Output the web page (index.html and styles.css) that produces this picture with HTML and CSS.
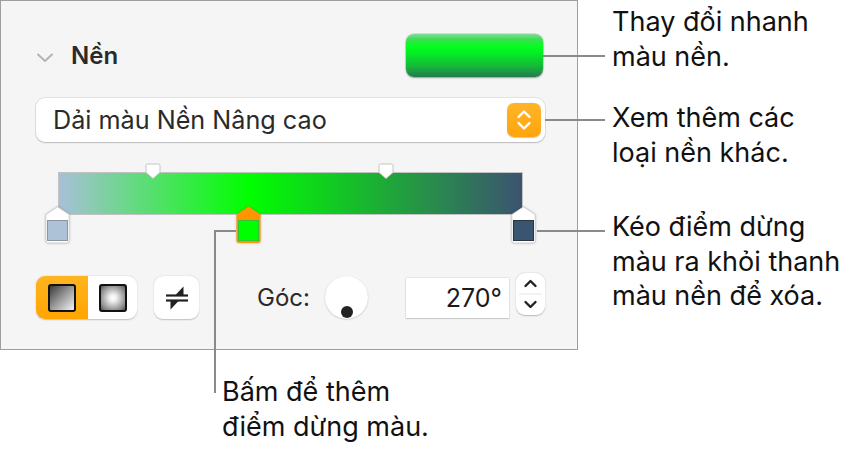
FILE: index.html
```html
<!DOCTYPE html>
<html lang="vi">
<head>
<meta charset="utf-8">
<title>Nền</title>
<link rel="stylesheet" href="styles.css">
</head>
<body>
<div class="stage">
  <div class="top">
    <section class="panel">
      <div class="head">
        <svg class="chev" width="18" height="11" viewBox="0 0 18 11"><path d="M2 2.5 L9 9 L16 2.5" fill="none" stroke="#b4b4b4" stroke-width="2" stroke-linecap="round" stroke-linejoin="round"/></svg>
        <span class="title">Nền</span>
        <div class="well"></div>
      </div>
      <div class="select">
        <span class="sel-text">Dải màu Nền Nâng cao</span>
        <span class="pop">
          <svg width="34" height="34" viewBox="0 0 34 34"><path d="M11.5 14 L17 8.5 L22.5 14 M11.5 20 L17 25.5 L22.5 20" fill="none" stroke="#fff" stroke-width="2.4" stroke-linecap="round" stroke-linejoin="round"/></svg>
        </span>
      </div>
      <div class="grad">
        <div class="bar"></div>
        <svg class="mid" style="left:109px" width="16" height="17" viewBox="0 0 16 17"><path d="M2.5 1 H13.5 Q15 1 15 2.5 V9.5 L8 15.5 L1 9.5 V2.5 Q1 1 2.5 1 Z" fill="#fff" stroke="#c4c4c4" stroke-width="1"/></svg>
        <svg class="mid" style="left:342px" width="16" height="17" viewBox="0 0 16 17"><path d="M2.5 1 H13.5 Q15 1 15 2.5 V9.5 L8 15.5 L1 9.5 V2.5 Q1 1 2.5 1 Z" fill="#fff" stroke="#c4c4c4" stroke-width="1"/></svg>
        <svg class="stop" style="left:9px" width="25" height="38" viewBox="0 0 25 38"><path d="M12.5 0.8 L24.2 8.6 V34.5 Q24.2 37 21.7 37 H3.3 Q0.8 37 0.8 34.5 V8.6 Z" fill="#fff" stroke="#cfcfcf" stroke-width="1"/><rect x="2.5" y="14.5" width="20" height="20" fill="#adc1d7" stroke="#8d95a0" stroke-width="1"/></svg>
        <svg class="stop" style="left:200px" width="25" height="38" viewBox="0 0 25 38"><path d="M12.5 0.3 L24.6 8.6 V34.5 Q24.6 37 22.1 37 H2.9 Q0.4 37 0.4 34.5 V8.6 Z" fill="#ff9500"/><rect x="2.5" y="14.5" width="20" height="20" fill="#00ff00" stroke="#33c433" stroke-width="1"/></svg>
        <svg class="stop" style="left:475px" width="25" height="38" viewBox="0 0 25 38"><path d="M12.5 0.8 L24.2 8.6 V34.5 Q24.2 37 21.7 37 H3.3 Q0.8 37 0.8 34.5 V8.6 Z" fill="#fff" stroke="#cfcfcf" stroke-width="1"/><rect x="2.5" y="14.5" width="20" height="20" fill="#3a5570" stroke="#2a3644" stroke-width="1"/></svg>
      </div>
      <div class="controls">
        <div class="seg">
          <span class="seg-btn on"><i class="sq lin"></i></span>
          <span class="seg-btn"><i class="sq rad"></i></span>
        </div>
        <span class="swap">
          <svg width="26" height="26" viewBox="0 0 26 26"><path d="M2 10.5 H24" stroke="#222" stroke-width="2.2"/><path d="M11 10.5 H19.5 V1.5 Z" fill="#222"/><path d="M2 15.5 H24" stroke="#222" stroke-width="2.2"/><path d="M6.5 15.5 H15 L6.5 24.5 Z" fill="#222"/></svg>
        </span>
        <span class="lbl">Góc:</span>
        <div class="dial"><i class="dot"></i></div>
        <div class="num">270°</div>
        <div class="step">
          <svg width="29" height="42" viewBox="0 0 29 42"><path d="M9.5 13 L14.5 8 L19.5 13" fill="none" stroke="#222" stroke-width="2.4" stroke-linecap="round" stroke-linejoin="round"/><path d="M3 21 H26" stroke="#e4e4e4" stroke-width="1"/><path d="M9.5 29 L14.5 34 L19.5 29" fill="none" stroke="#222" stroke-width="2.4" stroke-linecap="round" stroke-linejoin="round"/></svg>
        </div>
      </div>
    </section>
    <div class="notes">
      <p class="note n1">Thay đổi nhanh<br>màu nền.</p>
      <p class="note n2">Xem thêm các<br>loại nền khác.</p>
      <p class="note n3">Kéo điểm dừng<br>màu ra khỏi thanh<br>màu nền để xóa.</p>
    </div>
  </div>
  <p class="note n4">Bấm để thêm<br>điểm dừng màu.</p>

  <span class="ln h l1"></span>
  <span class="ln h l2"></span>
  <span class="ln h l3"></span>
  <span class="ln h l4"></span>
  <span class="ln v l5"></span>
</div>
</body>
</html>
```
FILE: styles.css
```css
* { box-sizing: border-box; }
html, body { margin: 0; padding: 0; background: #fff; }
body {
  font-family: "Inter", "Noto Sans", sans-serif;
  color: #1c1c1c;
  width: 857px;
  height: 457px;
  overflow: hidden;
}
.stage { position: relative; width: 857px; height: 457px; }
.top { display: flex; align-items: flex-start; }

.panel {
  width: 578px;
  height: 350px;
  flex: none;
  background: #f5f5f5;
  border: 1px solid #9e9e9e;
  padding: 33px 32px 0 35px;
}
.head { display: flex; align-items: center; height: 43px; }
.chev { display: block; margin-top: 4px; }
.title {
  margin-left: 17px;
  font-size: 24px;
  font-weight: 600;
  color: #2a2a2a;
}
.well {
  margin-left: auto;
  margin-right: 2px;
  width: 137px;
  height: 43px;
  border-radius: 8px;
  background: linear-gradient(to bottom, #86d99a 0%, #3ae052 12%, #00ff1c 30%, #06e826 48%, #15b83a 75%, #267a4f 100%);
  box-shadow: 0 0 0 0.5px rgba(0,0,0,0.18), 0 1px 2px rgba(0,0,0,0.3);
}

.select {
  margin-top: 21px;
  height: 44px;
  background: #fff;
  border-radius: 9px;
  box-shadow: 0 0 0 1px rgba(0,0,0,0.07), 0 1px 1.5px rgba(0,0,0,0.18);
  display: flex;
  align-items: center;
  padding: 0 4px 0 17px;
}
.sel-text { font-size: 25.2px; color: #2a2a2a; }
.pop {
  margin-left: auto;
  width: 34px;
  height: 34px;
  border-radius: 7px;
  background: linear-gradient(to bottom, #ffb52a, #ffa40c);
  box-shadow: 0 0.5px 1px rgba(0,0,0,0.2);
}
.pop svg { display: block; }

.grad { position: relative; margin-top: 21px; height: 81px; }
.bar {
  position: absolute;
  left: 22px;
  top: 9px;
  width: 465px;
  height: 43px;
  border: 1px solid #c2c2c2;
  background: linear-gradient(to right, #a8c0d8 0%, #00ff00 41%, #3c5371 100%);
}
.mid { position: absolute; top: 0; display: block; }
.stop { position: absolute; top: 43px; display: block; filter: drop-shadow(0 0.5px 0.8px rgba(0,0,0,0.2)); }

.controls { display: flex; align-items: center; margin-top: 32px; height: 43px; }
.seg {
  display: flex;
  width: 101px;
  height: 43px;
  border-radius: 9px;
  background: #fff;
  overflow: hidden;
  box-shadow: 0 0.5px 1.5px rgba(0,0,0,0.22);
}
.seg-btn { flex: 1; display: flex; align-items: center; justify-content: center; }
.seg-btn.on { background: linear-gradient(to bottom, #ffb420, #ffa500); flex: 0 0 52px; }
.sq {
  display: block;
  width: 28px;
  height: 28px;
  border: 2px solid #111;
  border-radius: 3px;
}
.sq.lin { background: linear-gradient(135deg, #3a3a3a 0%, #9a9a9a 50%, #f4f4f4 100%); }
.sq.rad { background: radial-gradient(circle at 50% 50%, #ffffff 0%, #f0f0f0 20%, #8c8c8c 75%, #555 100%); }

.swap {
  margin-left: 17px;
  width: 45px;
  height: 43px;
  border-radius: 9px;
  background: #fff;
  box-shadow: 0 0.5px 1.5px rgba(0,0,0,0.22);
  display: flex;
  align-items: center;
  justify-content: center;
}
.swap svg { display: block; }
.lbl { margin-left: 58px; width: 68px; font-size: 24px; color: #2a2a2a; }
.dial {
  position: relative;
  width: 43px;
  height: 43px;
  border-radius: 50%;
  background: #fff;
  box-shadow: 0 0.5px 1.5px rgba(0,0,0,0.25);
}
.dot {
  position: absolute;
  left: 16px;
  top: 30px;
  width: 12px;
  height: 12px;
  border-radius: 50%;
  background: #222;
}
.num {
  margin-left: 38px;
  width: 103px;
  height: 40px;
  background: #fff;
  box-shadow: 0 0 0 0.5px rgba(0,0,0,0.12), 0 1px 1px rgba(0,0,0,0.12);
  font-size: 25px;
  color: #1a1a1a;
  text-align: right;
  padding-right: 7px;
  line-height: 40px;
}
.step {
  margin-left: 7px;
  margin-bottom: 7px;
  width: 29px;
  height: 42px;
  border-radius: 9px;
  background: #fff;
  box-shadow: 0 0.5px 1.5px rgba(0,0,0,0.25);
}
.step svg { display: block; }

.notes { margin-left: 34px; }
.note {
  margin: 0;
  font-size: 27px;
  line-height: 34.5px;
  color: #111;
  white-space: nowrap;
}
.n1 { margin-top: 5px; }
.n2 { margin-top: 27px; }
.n3 { margin-top: 40px; }
.n4 { margin-top: 25px; margin-left: 222px; }

.ln { position: absolute; background: #8a8a8a; }
.ln.h { height: 2px; }
.ln.v { width: 2px; }
.l1 { left: 543px; top: 55px; width: 62px; }
.l2 { left: 545px; top: 119px; width: 60px; }
.l3 { left: 537px; top: 230px; width: 68px; }
.l4 { left: 214px; top: 230px; width: 22px; }
.l5 { left: 214px; top: 230px; height: 163px; }
```
